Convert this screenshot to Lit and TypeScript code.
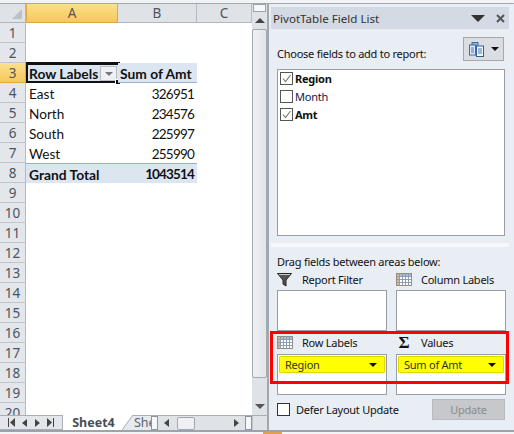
import { LitElement, html, css, svg } from "lit";
import { customElement } from "lit/decorators.js";

const ROWS: Record<number, [string, string, string]> = {
  3: ["Row Labels", "Sum of Amt", "head"],
  4: ["East", "326951", ""],
  5: ["North", "234576", ""],
  6: ["South", "225997", ""],
  7: ["West", "255990", ""],
  8: ["Grand Total", "1043514", "total"],
};

const gridIcon = svg`<svg class="ic" width="16" height="13" viewBox="0 0 16 13">
  <rect x="0.5" y="0.5" width="15" height="12" fill="#fff" stroke="#8f8f86"/>
  <rect x="1" y="1" width="14" height="2.5" fill="#a9bcd6"/>
  <rect x="1" y="1" width="2.5" height="11" fill="#d8b98a"/>
  <path d="M3.5 1v11M6.5 1v11M9.5 1v11M12.5 1v11M1 3.5h14M1 6.500h14M1 9.500h14" stroke="#8c9db5" stroke-width="1" fill="none"/>
</svg>`;
const check = svg`<svg width="13" height="13" viewBox="0 0 13 13"><path d="M3 6.500l2.500 3L10.500 3" fill="none" stroke="#777" stroke-width="1.1"/></svg>`;

@customElement("app-root")
export class AppRoot extends LitElement {
  static styles = css`
    :host { display: flex; flex-direction: column; width: 514px; height: 434px; position: relative; overflow: hidden; background: #e9edf4; }
    * { box-sizing: border-box; }
    .strip { height: 4px; flex: none; background: #f1f3f6; border-bottom: 1px solid #a3a8af; }
    .main { height: 426px; flex: none; display: flex; }
    .bline { height: 2px; flex: none; background: #9ea3aa; }
    .status { height: 2px; flex: none; background: #f3f4f6; padding-left: 263px; }
    .status div { width: 19px; height: 2px; background: #e0a050; }

    .excel { width: 268px; display: flex; flex-direction: column; background: #fff; flex: none; }
    .work { height: 411px; display: flex; flex: none; }
    .sheet { width: 252px; flex: none; display: flex; flex-direction: column; overflow: hidden; font: 13.6px Lato, "Liberation Sans", sans-serif; color: #111; }
    .cols { height: 19px; display: grid; grid-template-columns: 26px 92px 79px 1fr; flex: none; background: #dfe3e8; }
    .col { display: flex; align-items: center; justify-content: center; border-right: 1px solid #b5bac0; border-bottom: 1px solid #b1b6bc; font: 13.5px "Noto Sans", sans-serif; color: #4a5462; }
    .col.sel { background: linear-gradient(#fbe08e, #f7c85a); border: 1px solid #e0a93a; border-top: none; color: #555; }
    .corner { position: relative; }
    .corner::after { content: ""; position: absolute; right: 3px; bottom: 3px; border: 5px solid transparent; border-right-color: #bcc1c7; border-bottom-color: #bcc1c7; }
    .row { height: 20px; flex: none; display: grid; grid-template-columns: 26px 92px 79px 1fr; }
    .rh { background: #e3e6ea; border-right: 1px solid #b5bac0; border-bottom: 1px solid #c0c5cb; display: flex; align-items: center; justify-content: center; font: 13.5px "Noto Sans", sans-serif; color: #4a5462; }
    .rh.sel { background: linear-gradient(#fbe08e, #f7c85a); border-color: #e0a93a; color: #555; }
    .a, .b { display: flex; align-items: center; padding: 1px 3px 0; white-space: nowrap; position: relative; }
    .b { justify-content: flex-end; padding-right: 3px; font-size: 13.5px; letter-spacing: -0.8px; }
    .head .a, .head .b { background: #dce6f1; font-weight: 700; font-size: 13.8px; letter-spacing: 0; border-bottom: 1px solid #95b3d7; }
    .head .b { padding-left: 2px; padding-right: 0; justify-content: flex-start; }
    .total .a, .total .b { background: #dce6f1; font-weight: 700; border-top: 1px solid #95b3d7; }
    .total .a { font-size: 13.8px; }
    .total .b { letter-spacing: -0.85px; }
    .active { position: absolute; inset: -1px -2px -1px 0; border: 2px solid #111; border-width: 3px 2px 2px 2px; pointer-events: none; }
    .handle { position: absolute; right: -3px; bottom: -4px; width: 6px; height: 6px; background: #111; border: 1px solid #fff; }
    .flt { position: absolute; right: 1px; top: 3px; width: 17px; height: 15px; background: #eef0f3; border: 1px solid #b9bdc2; display: flex; align-items: center; justify-content: center; }
    .tri { width: 0; height: 0; border-left: 4px solid transparent; border-right: 4px solid transparent; border-top: 4px solid #777; }
    .vbar { width: 16px; flex: none; background: #dfe3e8; display: flex; flex-direction: column; border-right: 1px solid #a3a8af; }
    .split { height: 8px; margin: 0 1px; background: #f6f7f9; border: 1px solid #9aa0a8; flex: none; }
    .arr { height: 17px; flex: none; display: flex; align-items: center; justify-content: center; }
    .thumb { height: 349px; flex: none; background: linear-gradient(90deg, #eef0f3, #e2e5e9); border: 1px solid #a3a8af; border-radius: 2px; }
    .fill { flex: 1; }
    .up { border-left: 5px solid transparent; border-right: 5px solid transparent; border-bottom: 5px solid #444; }
    .dn { border-left: 5px solid transparent; border-right: 5px solid transparent; border-top: 5px solid #555; }
    .tabs { height: 15px; flex: none; display: flex; align-items: stretch; background: #dfe3e8; border-top: 1px solid #a9aeb5; font: 12.5px "Noto Sans", sans-serif; }
    .nav { width: 63px; flex: none; display: flex; align-items: center; justify-content: space-around; padding: 0 4px; border-right: 1px solid #a9aeb5; border-bottom: 1px solid #a9aeb5; background: #e3e6ea; }
    .tab { width: 59px; flex: none; background: #fff; color: #444e5c; font-weight: 700; display: flex; align-items: center; justify-content: center; margin-top: -1px; padding-left: 2px; }
    .slant { width: 11px; flex: none; margin-top: -1px; }
    .tab2 { width: 18px; flex: none; color: #5b6572; overflow: hidden; padding-left: 1px; line-height: 14px; background: #e6e9ed; }
    .mini { width: 7px; flex: none; margin: 0; background: #f6f7f9; border: 1px solid #8f959d; height: 14px; }
    .hbar { width: 94px; flex: none; display: flex; align-items: center; padding: 0 0 0 6px; gap: 0; }
    .lt { border-top: 4px solid transparent; border-bottom: 4px solid transparent; border-right: 5px solid #444; }
    .rt { border-top: 4px solid transparent; border-bottom: 4px solid transparent; border-left: 5px solid #444; }
    .hthumb { width: 18px; height: 13px; margin-left: 8px; background: #eef0f3; border: 1px solid #a3a8af; border-radius: 2px; }
    .gap6 { margin-left: 6px; }
    .cornerbox { width: 16px; flex: none; border-left: 1px solid #c4c8ce; border-right: 1px solid #a3a8af; }

    .panel { width: 246px; flex: none; display: flex; flex-direction: column; padding: 3px 5px 0 2px; border-left: 1px solid #a3a8af; background: #e9edf4; font: 11px "Noto Sans", sans-serif; letter-spacing: -0.25px; color: #111; }
    .title { height: 22px; flex: none; background: #d3dae3; display: flex; align-items: center; padding: 0 4px 0 2px; font-size: 11.6px; color: #333; letter-spacing: 0; }
    .title span { flex: 1; }
    .bigtri { border-left: 7px solid transparent; border-right: 7px solid transparent; border-top: 7px solid #333; margin-right: 11px; }
    .body { flex: none; height: 218px; padding: 8px 4px 7px 6px; display: flex; flex-direction: column; border-bottom: 4px solid #f7f8fb; }
    .choose { display: flex; justify-content: space-between; align-items: flex-end; height: 24px; flex: none; }
    .choose .lbl { line-height: 14px; padding-bottom: 0; }
    .tool { width: 41px; height: 24px; margin-right: 1px; background: #dadde2; border: 1px solid #a5a8ad; display: flex; align-items: center; justify-content: center; gap: 7px; }
    .blk { border-left: 4px solid transparent; border-right: 4px solid transparent; border-top: 4px solid #111; }
    .list { margin-top: 8px; flex: 1; background: #fff; border: 1px solid #9a9ea4; padding: 0 2px; display: flex; flex-direction: column; }
    .it { height: 18px; display: flex; align-items: center; gap: 2px; color: #10204a; flex: none; }
    .it:first-child { margin-top: -1px; }
    .it.on { font-weight: 700; color: #111; }
    .cb { width: 13px; height: 13px; flex: none; background: #fff; border: 1px solid #555; display: flex; }
    .cb svg { margin: -1px; }
    .lower { flex: 1; padding: 8px 4px 0 6px; display: flex; flex-direction: column; }
    .drag { line-height: 14px; }
    .areas { display: grid; grid-template-columns: 110px 110px; column-gap: 9px; }
    .ah { height: 21px; display: flex; align-items: center; gap: 6px; white-space: nowrap; }
    .ah.lo { height: 23px; }
    .ic { flex: none; margin-right: 3px; }
    .box { height: 41px; background: #fff; border: 1px solid #9a9ea4; padding: 1px; }
    .pill { height: 17px; background: #ffff00; border: 1px solid #e3d700; border-radius: 1px; display: flex; align-items: center; justify-content: space-between; padding: 0 7px 0 5px; color: #333; }
    .foot { display: flex; align-items: center; margin-top: 4px; height: 21px; }
    .foot .cb { margin-right: 6px; border-color: #333; }
    .foot .cb + span { flex: 1; }
    .upd { width: 73px; height: 21px; background: #c6c8cb; border: 1px solid #b8babd; color: #8a8c8f; display: flex; align-items: center; justify-content: center; }
    .sig { width: 16px; text-align: center; font: 700 17px "Liberation Serif", serif; color: #111; }
    .red { position: absolute; left: 270px; top: 331px; width: 239px; height: 53px; border: 3px solid #ff0000; pointer-events: none; }
  `;

  private row(n: number) {
    const r = ROWS[n];
    const sel = n === 3;
    return html`<div class="row ${r ? r[2] : ""}">
      <div class="rh ${sel ? "sel" : ""}">${n}</div>
      ${r
        ? html`<div class="a">${r[0]}${sel
              ? html`<div class="flt"><div class="tri"></div></div><div class="active"><div class="handle"></div></div>`
              : ""}</div><div class="b">${r[1]}</div>`
        : html`<div></div><div></div>`}
      <div></div>
    </div>`;
  }

  render() {
    const rows = Array.from({ length: 20 }, (_, i) => i + 1);
    return html`
      <div class="strip"></div>
      <div class="main">
        <div class="excel">
          <div class="work">
            <div class="sheet">
              <div class="cols"><div class="col corner"></div><div class="col sel">A</div><div class="col">B</div><div class="col">C</div></div>
              ${rows.map((n) => this.row(n))}
            </div>
            <div class="vbar">
              <div class="split"></div>
              <div class="arr"><div class="up"></div></div>
              <div class="thumb"></div>
              <div class="fill"></div>
              <div class="arr"><div class="dn"></div></div>
            </div>
          </div>
          <div class="tabs">
            <div class="nav">
              <svg width="7" height="9" viewBox="0 0 7 9"><path d="M.5 0v9" stroke="#444"/><path d="M7 0v9L2 4.500z" fill="#444"/></svg>
              <div class="lt"></div><div class="rt"></div>
              <svg width="7" height="9" viewBox="0 0 7 9"><path d="M6.500 0v9" stroke="#444"/><path d="M0 0v9l5-4.500z" fill="#444"/></svg>
            </div>
            <div class="tab">Sheet4</div>
            <svg class="slant" width="11" height="15" viewBox="0 0 11 15"><path d="M0 0h11v15H0z" fill="#e6e9ed"/><path d="M0 0h11L0 15z" fill="#fff"/><path d="M0 15L11 0" stroke="#a9aeb5" fill="none"/></svg>
            <div class="tab2">She</div>
            <div class="mini"></div>
            <div class="hbar"><div class="lt"></div><div class="hthumb"></div><div class="fill"></div><div class="rt"></div><div class="mini gap6"></div></div>
            <div class="cornerbox"></div>
          </div>
        </div>
        <div class="panel">
          <div class="title"><span>PivotTable Field List</span><div class="bigtri"></div>
            <svg width="9" height="9" viewBox="0 0 9 9"><path d="M1 1l7 7M8 1L1 8" stroke="#555" stroke-width="2"/></svg>
          </div>
          <div class="body">
            <div class="choose"><div class="lbl">Choose fields to add to report:</div>
              <div class="tool">
                <svg width="15" height="15" viewBox="0 0 15 15"><rect x="3" y="0.500" width="6" height="9" fill="#8fb3dc" stroke="#3c6aa5"/><rect x="0.500" y="3" width="6" height="10" fill="#dfe9f5" stroke="#3c6aa5"/><rect x="7.500" y="4" width="7" height="10.500" fill="#f3f7fc" stroke="#2f5f9e"/><path d="M2 6h3M2 8h3M2 10h3M9 7h4M9 9h4M9 11h4" stroke="#4477b5"/></svg>
                <div class="blk"></div>
              </div>
            </div>
            <div class="list">
              <div class="it on"><div class="cb">${check}</div>Region</div>
              <div class="it"><div class="cb"></div>Month</div>
              <div class="it on"><div class="cb">${check}</div>Amt</div>
            </div>
          </div>
          <div class="lower">
            <div class="drag">Drag fields between areas below:</div>
            <div class="areas">
              <div class="ah">
                <svg class="ic" width="16" height="14" viewBox="0 0 16 14"><path d="M.5 .5h14L9 7v6L6 11V7z" fill="#555" stroke="#222"/><path d="M2 1.500h11" stroke="#ccc"/></svg>Report Filter
              </div>
              <div class="ah">${gridIcon}Column Labels</div>
              <div class="box"></div><div class="box"></div>
              <div class="ah lo">${gridIcon}Row Labels</div>
              <div class="ah lo"><span class="ic sig">Σ</span>Values</div>
              <div class="box"><div class="pill">Region<div class="blk"></div></div></div>
              <div class="box"><div class="pill">Sum of Amt<div class="blk"></div></div></div>
            </div>
            <div class="foot"><div class="cb"></div><span>Defer Layout Update</span><div class="upd">Update</div></div>
          </div>
        </div>
      </div>
      <div class="bline"></div>
      <div class="status"><div></div></div>
      <div class="red"></div>
    `;
  }
}
